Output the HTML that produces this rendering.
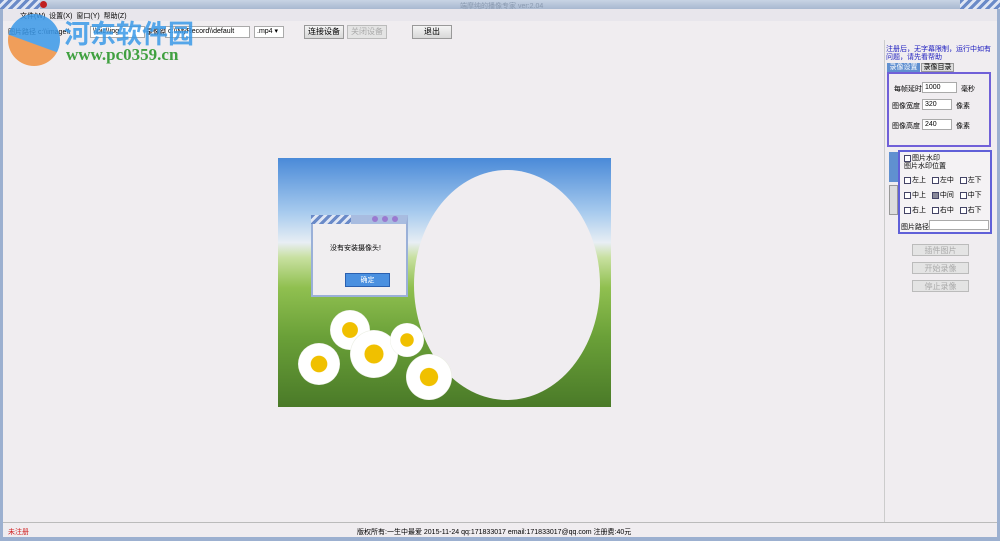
<!DOCTYPE html>
<html><head><meta charset="utf-8"><style>
*{margin:0;padding:0;box-sizing:border-box}
body{width:1000px;height:541px;background:#f0edf0;font-family:"Liberation Sans","Noto Sans CJK SC",sans-serif;font-size:8px;color:#000;position:relative;overflow:hidden}
.a{position:absolute}
.btn{position:absolute;background:linear-gradient(#f4f4f4,#d8d8d8);border:1px solid #999;text-align:center;font-size:8px;line-height:12px}
.dis{color:#aaa;border-color:#bbb;background:#e4e4e4}
.inp{position:absolute;background:#fff;border:1px solid #aaa;font-size:7px;line-height:10px;padding-left:2px}
.cb{display:inline-block;width:7px;height:7px;border:1px solid #446;background:#fff;vertical-align:middle;margin-right:1px}
.d{position:absolute;border-radius:50%;background:radial-gradient(#f0c000 27%,#fff 29%,#fff 68%,#e8ece0 70%)}
</style></head><body>
<div class="a" style="left:0;top:0;width:1000px;height:9px;background:linear-gradient(#c8d4e4,#a8b8d0)"></div>
<div class="a" style="left:0;top:0;width:40px;height:9px;background:repeating-linear-gradient(135deg,#6a8ac8 0 3px,#dfe6f4 3px 6px)"></div>
<div class="a" style="left:40px;top:1px;width:7px;height:7px;border-radius:50%;background:#c02020"></div>
<div class="a" style="left:460px;top:1px;color:#8a9ab0;font-size:7px">端摩纯的播像专家 ver:2.04</div>
<div class="a" style="left:960px;top:0;width:40px;height:9px;background:repeating-linear-gradient(135deg,#6a8ac8 0 3px,#dfe6f4 3px 6px)"></div>
<div class="a" style="left:0;top:9px;width:3px;height:532px;background:#9cb0d0"></div>
<div class="a" style="left:997px;top:9px;width:3px;height:532px;background:#9cb0d0"></div>
<div class="a" style="left:3px;top:9px;width:994px;height:12px;background:#e8e6ec"></div>
<div class="a" style="left:20px;top:11px;font-size:7px">文件(W)&nbsp; 设置(X)&nbsp; 窗口(Y)&nbsp; 帮助(Z)</div>
<div class="a" style="left:8px;top:27px;font-size:7px">图片路径 c:\\image\\</div>
<div class="inp" style="left:90px;top:26px;width:55px;height:12px">\\pic\\jpg</div>
<div class="a" style="left:146px;top:27px;font-size:7px">录像路径</div>
<div class="inp" style="left:165px;top:26px;width:85px;height:12px">c:\\MyRecord\\default</div>
<div class="inp" style="left:254px;top:26px;width:30px;height:12px">.mp4 ▾</div>
<div class="btn" style="left:304px;top:25px;width:40px;height:14px">连接设备</div>
<div class="btn dis" style="left:347px;top:25px;width:40px;height:14px">关闭设备</div>
<div class="btn" style="left:412px;top:25px;width:40px;height:14px">退出</div>
<div class="a" style="left:8px;top:14px;width:52px;height:52px;border-radius:50%;background:linear-gradient(200deg,#3a98e8 55%,#f09040 56%);opacity:.85"></div>
<div class="a" style="left:64px;top:14px;font-size:26px;font-weight:bold;color:#3a9ae8;opacity:.85">河东软件园</div>
<div class="a" style="left:66px;top:45px;font-size:17px;font-weight:bold;color:#40a040;font-family:'Liberation Serif',serif">www.pc0359.cn</div>
<div class="a" style="left:278px;top:158px;width:333px;height:249px;overflow:hidden;background:linear-gradient(#4a8ad8 0%,#a8cbee 22%,#e8eef4 34%,#c8e0a0 40%,#90c050 52%,#6aa038 72%,#4a7a28 100%)">
<div class="a" style="left:136px;top:12px;width:186px;height:230px;border-radius:50%;background:#f0edf0"></div>
<div class="d" style="left:52px;top:152px;width:40px;height:40px"></div>
<div class="d" style="left:72px;top:172px;width:48px;height:48px"></div>
<div class="d" style="left:112px;top:165px;width:34px;height:34px"></div>
<div class="d" style="left:20px;top:185px;width:42px;height:42px"></div>
<div class="d" style="left:128px;top:196px;width:46px;height:46px"></div>
</div>
<div class="a" style="left:311px;top:215px;width:97px;height:82px;background:#f0eef0;border:2px solid #9ab0d8;border-top:9px solid #a8bce0"></div>
<div class="a" style="left:311px;top:215px;width:40px;height:9px;background:repeating-linear-gradient(135deg,#6a8ac8 0 3px,#dfe6f4 3px 6px)"></div>
<div class="a" style="left:372px;top:216px;width:6px;height:6px;border-radius:50%;background:#9a7ad0"></div>
<div class="a" style="left:382px;top:216px;width:6px;height:6px;border-radius:50%;background:#9a7ad0"></div>
<div class="a" style="left:392px;top:216px;width:6px;height:6px;border-radius:50%;background:#9a7ad0"></div>
<div class="a" style="left:330px;top:243px;font-size:7px">没有安装摄像头!</div>
<div class="a" style="left:345px;top:273px;width:45px;height:14px;background:#4a90e0;color:#fff;text-align:center;line-height:14px;font-size:7px;border:1px solid #2a60b0">确定</div>
<div class="a" style="left:884px;top:40px;width:1px;height:482px;background:#ccc"></div>
<div class="a" style="left:886px;top:46px;width:110px;color:#2020c0;font-size:7px;line-height:8px">注册后，无字幕限制，运行中如有问题，请先看帮助</div>
<div class="a" style="left:887px;top:63px;width:33px;height:9px;background:#6090d0;color:#fff;font-size:7px;text-align:center;line-height:9px">录像设置</div>
<div class="a" style="left:921px;top:63px;width:33px;height:9px;background:#ddd;border:1px solid #999;font-size:7px;text-align:center;line-height:8px">录像目录</div>
<div class="a" style="left:887px;top:72px;width:104px;height:75px;border:2px solid #7060d8"></div>
<div class="a" style="left:894px;top:84px;font-size:7px">每帧延时</div><div class="inp" style="left:922px;top:82px;width:35px;height:11px">1000</div><div class="a" style="left:961px;top:84px;font-size:7px">毫秒</div>
<div class="a" style="left:892px;top:101px;font-size:7px">图像宽度</div><div class="inp" style="left:922px;top:99px;width:30px;height:11px">320</div><div class="a" style="left:956px;top:101px;font-size:7px">像素</div>
<div class="a" style="left:892px;top:121px;font-size:7px">图像高度</div><div class="inp" style="left:922px;top:119px;width:30px;height:11px">240</div><div class="a" style="left:956px;top:121px;font-size:7px">像素</div>
<div class="a" style="left:889px;top:152px;width:9px;height:30px;background:#6090d0"></div>
<div class="a" style="left:889px;top:185px;width:9px;height:30px;background:#ddd;border:1px solid #999"></div>
<div class="a" style="left:898px;top:150px;width:94px;height:84px;border:2px solid #6060d8;background:#f4f2f4"></div>
<div class="a" style="left:904px;top:153px;font-size:7px"><span class="cb"></span>图片水印</div>
<div class="a" style="left:904px;top:161px;font-size:7px">图片水印位置</div>
<div class="a" style="left:904px;top:173px;font-size:7px;line-height:15px;width:86px">
<span class="cb"></span>左上&nbsp;&nbsp;&nbsp;<span class="cb"></span>左中&nbsp;&nbsp;&nbsp;<span class="cb"></span>左下<br>
<span class="cb"></span>中上&nbsp;&nbsp;&nbsp;<span class="cb" style="background:#889"></span>中间&nbsp;&nbsp;&nbsp;<span class="cb"></span>中下<br>
<span class="cb"></span>右上&nbsp;&nbsp;&nbsp;<span class="cb"></span>右中&nbsp;&nbsp;&nbsp;<span class="cb"></span>右下</div>
<div class="a" style="left:901px;top:222px;font-size:7px">图片路径</div><div class="inp" style="left:929px;top:220px;width:60px;height:10px"></div>
<div class="btn dis" style="left:912px;top:244px;width:57px;height:12px">插件图片</div>
<div class="btn dis" style="left:912px;top:262px;width:57px;height:12px">开始录像</div>
<div class="btn dis" style="left:912px;top:280px;width:57px;height:12px">停止录像</div>
<div class="a" style="left:3px;top:522px;width:994px;height:1px;background:#bbb"></div>
<div class="a" style="left:8px;top:527px;color:#d02020;font-size:7px">未注册</div>
<div class="a" style="left:357px;top:527px;font-size:7px">版权所有:一生中最爱 2015-11-24 qq:171833017 email:171833017@qq.com 注册费:40元</div>
<div class="a" style="left:0;top:537px;width:1000px;height:4px;background:#9cb0d0"></div>
</body></html>
